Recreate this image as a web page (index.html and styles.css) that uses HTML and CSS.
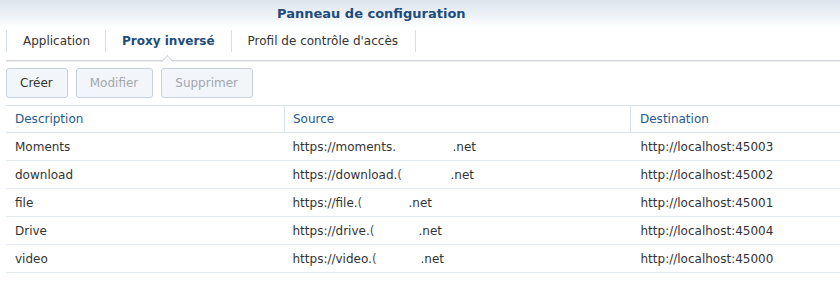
FILE: index.html
```html
<!DOCTYPE html>
<html lang="fr">
<head>
<meta charset="utf-8">
<title>Panneau de configuration</title>
<link rel="stylesheet" href="styles.css">
</head>
<body>
<div class="window">
  <header class="titlebar">
    <h1 class="title">Panneau de configuration</h1>
  </header>
  <nav class="tabs">
    <div class="tab">Application</div>
    <div class="tab active">Proxy inversé</div>
    <div class="tab wide">Profil de contrôle d'accès</div>
  </nav>
  <div class="toolbar">
    <button class="btn">Créer</button>
    <button class="btn" disabled>Modifier</button>
    <button class="btn" disabled>Supprimer</button>
  </div>
  <table class="grid">
    <thead>
      <tr>
        <th class="c1">Description</th>
        <th class="c2">Source</th>
        <th class="c3">Destination</th>
      </tr>
    </thead>
    <tbody>
      <tr>
        <td>Moments</td>
        <td><span class="pre w160">https://moments.</span>.net</td>
        <td>http://localhost:45003</td>
      </tr>
      <tr>
        <td>download</td>
        <td><span class="pre w158">https://download.<span class="cut">(</span></span>.net</td>
        <td>http://localhost:45002</td>
      </tr>
      <tr>
        <td>file</td>
        <td><span class="pre w116">https://file.<span class="cut">(</span></span>.net</td>
        <td>http://localhost:45001</td>
      </tr>
      <tr>
        <td>Drive</td>
        <td><span class="pre w126">https://drive.<span class="cut">(</span></span>.net</td>
        <td>http://localhost:45004</td>
      </tr>
      <tr>
        <td>video</td>
        <td><span class="pre w128">https://video.<span class="cut">(</span></span>.net</td>
        <td>http://localhost:45000</td>
      </tr>
    </tbody>
  </table>
</div>
</body>
</html>
```

FILE: styles.css
```css
html, body {
  margin: 0;
  padding: 0;
  background: #ffffff;
}

body {
  font-family: "DejaVu Sans", Verdana, sans-serif;
  font-size: 12px;
  color: #333333;
  width: 840px;
  height: 295px;
  overflow: hidden;
}

.window {
  display: flex;
  flex-direction: column;
}

.titlebar {
  height: 28px;
  background: linear-gradient(to bottom, #dce4ed 0%, #f3f6f9 70%, #ffffff 100%);
  display: flex;
  align-items: center;
  padding-left: 277px;
}

.title {
  margin: 0;
  font-size: 13px;
  font-weight: bold;
  color: #1d4c7d;
  line-height: 16px;
}

.tabs {
  display: flex;
  margin-left: 6px;
  padding-top: 2px;
  padding-bottom: 8px;
  border-bottom: 1px solid #cfd3d7;
  box-shadow: 0 1px 0 #eceef0;
  position: relative;
}

.tabs::before {
  content: "";
  width: 1px;
  background: #d5dfe9;
  align-self: stretch;
}

.tab {
  height: 22px;
  line-height: 22px;
  padding: 0 15px 0 16px;
  border-right: 1px solid #d5dfe9;
  color: #333333;
  white-space: nowrap;
  position: relative;
}

.tab.active {
  font-weight: bold;
  color: #1d4c7d;
  padding: 0 16px 0 16px;
}

.tab.wide {
  padding: 0 17px 0 16px;
}

.tab.active::after {
  content: "";
  position: absolute;
  left: 50%;
  bottom: -14px;
  width: 8px;
  height: 8px;
  margin-left: -5px;
  background: #ffffff;
  border-left: 1px solid #cfd3d7;
  border-top: 1px solid #cfd3d7;
  transform: rotate(45deg);
}

.toolbar {
  display: flex;
  gap: 8px;
  padding: 7px 6px 0 6px;
}

.btn {
  font-family: "DejaVu Sans", Verdana, sans-serif;
  font-size: 12px;
  height: 30px;
  padding: 0 14px 0 13px;
  border: 1px solid #c6d1dc;
  border-radius: 3px;
  background: #f2f5f9;
  color: #333333;
}

.btn[disabled] {
  color: #a3a8ad;
}

.grid {
  margin: 7px 0 0 6px;
  width: 834px;
  border-collapse: collapse;
  table-layout: fixed;
}

.grid th,
.grid td {
  height: 27px;
  padding: 0 0 0 9px;
  text-align: left;
  white-space: nowrap;
  border-bottom: 1px solid #e3e9f0;
}

.grid th {
  font-weight: normal;
  color: #265a8e;
  border-top: 1px solid #dbe4ee;
  border-bottom: 1px solid #dbe4ee;
  height: 26px;
}

.grid th.c1 { width: 269px; }
.grid th.c2 { width: 337px; padding-left: 8px; border-left: 1px solid #dbe4ee; }
.grid th.c3 { padding-left: 9px; border-left: 1px solid #dbe4ee; }

.grid td:nth-child(2) { padding-left: 8px; }
.grid td:nth-child(3) { padding-left: 10px; }

.pre {
  display: inline-block;
  white-space: nowrap;
}

.cut {
  color: #555555;
}

.w160 { width: 160px; }
.w158 { width: 158px; }
.w116 { width: 116px; }
.w126 { width: 126px; }
.w128 { width: 128px; }
```
